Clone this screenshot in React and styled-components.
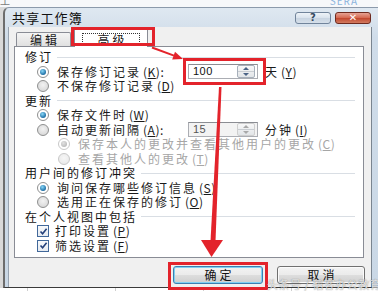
import React from 'react';
import styled, { createGlobalStyle } from 'styled-components';

const GlobalStyle = createGlobalStyle`
  html, body {
    margin: 0;
    padding: 0;
    background: #fff;
  }
  body {
    font-family: "Noto Sans CJK SC", "Noto Sans", sans-serif;
  }
`;

const FONT = `"Noto Sans CJK SC", "Noto Sans", sans-serif`;

const Page = styled.div`
  position: relative;
  width: 378px;
  height: 291px;
  overflow: hidden;
  display: flex;
  flex-direction: column;
  background: #f4f5f7;
`;

const TopStrip = styled.div`
  height: 7px;
  flex: none;
  display: flex;
  justify-content: space-between;
  overflow: hidden;
  background: #f7f8fa;
  font-size: 10px;
  line-height: 7px;
`;

const StripText = styled.span`
  margin: -3px 0 0 ${p => p.$left || 0}px;
  margin-right: ${p => p.$right || 0}px;
  color: ${p => p.$color};
  letter-spacing: 1px;
`;

const Middle = styled.div`
  flex: none;
  display: flex;
  padding-left: 3px;
  background: #d9d9d9;
`;

const Dialog = styled.div`
  width: 375px;
  height: 281px;
  box-sizing: border-box;
  display: flex;
  flex-direction: column;
  border-top: 1px solid #8c9aab;
  border-left: 2px solid #6d6d6d;
  border-bottom: 1px solid #3a3a3a;
  border-radius: 6px 0 0 0;
  background: linear-gradient(#dfe8f1, #cfdce9 30px, #cad8e6);
`;

const TitleBar = styled.div`
  height: 19px;
  flex: none;
  display: flex;
  align-items: center;
  justify-content: space-between;
  padding: 0 7px 0 7px;
`;

const Title = styled.span`
  font-size: 13px;
  letter-spacing: 1.2px;
  color: #111;
  line-height: 19px;
`;

const CaptionGroup = styled.div`
  display: flex;
  gap: 4px;
`;

const CaptionButton = styled.div`
  width: 36px;
  height: 12px;
  box-sizing: border-box;
  border-radius: 3px;
  display: flex;
  align-items: center;
  justify-content: center;
  font: bold 10px/10px "DejaVu Sans", sans-serif;
  border: 1px solid ${p => (p.$close ? '#6e2a1f' : '#71849b')};
  color: ${p => (p.$close ? '#fff' : '#34495f')};
  background: ${p =>
    p.$close
      ? 'linear-gradient(#e6a394, #d66c55 45%, #c24a31 55%, #d27b60)'
      : 'linear-gradient(#eef3f8, #dbe4ee 45%, #c9d5e2 55%, #d6e0ea)'};
`;

const Body = styled.div`
  flex: 1;
  display: flex;
  padding: 0 6px 0 3px;
`;

const Client = styled.div`
  flex: 1;
  display: flex;
  flex-direction: column;
  background: #f0f0f0;
  border-left: 1px solid #98a3b0;
  border-right: 1px solid #7a8590;
  font-family: ${FONT};
  font-size: 12px;
  letter-spacing: 2px;
  color: #1a1a1a;
`;

const TabsRow = styled.div`
  height: 19px;
  flex: none;
  display: flex;
  align-items: flex-end;
  gap: 3px;
  padding-left: 7px;
`;

const Highlight = styled.div`
  position: relative;
  display: inline-flex;
  &::after {
    content: '';
    position: absolute;
    top: ${p => p.$t}px;
    right: ${p => p.$r}px;
    bottom: ${p => p.$b}px;
    left: ${p => p.$l}px;
    border: 3px solid #e3232b;
    pointer-events: none;
    z-index: 5;
  }
`;

const Tab = styled.div`
  box-sizing: border-box;
  width: ${p => (p.$active ? 74 : 55)}px;
  height: ${p => (p.$active ? 19 : 14)}px;
  margin-bottom: ${p => (p.$active ? -1 : 0)}px;
  border: 1px solid #898c95;
  border-bottom: none;
  border-radius: 2px 2px 0 0;
  background: ${p => (p.$active ? '#fff' : 'linear-gradient(#f4f4f4, #e0e0e0)')};
  display: flex;
  align-items: center;
  justify-content: center;
  position: relative;
  z-index: ${p => (p.$active ? 2 : 1)};
  font-size: 12px;
  letter-spacing: 3px;
  line-height: 12px;
  padding-left: 3px;
`;

const FocusLabel = styled.span`
  outline: 1px dotted #333;
  padding: 0 11px 0 14px;
  line-height: 11px;
  height: 11px;
  margin: 2px 0 0 -3px;
`;

const Panel = styled.div`
  margin-left: 5px;
  width: 350px;
  height: 212px;
  box-sizing: border-box;
  border: 1px solid #898c95;
  background: #fff;
  padding: 3px 8px 0 10px;
  position: relative;
  z-index: 1;
`;

const SectionHeader = styled.div`
  display: flex;
  align-items: center;
  height: 14.5px;
  line-height: 14.5px;
  gap: 4px;
  white-space: nowrap;
  color: #111;
  &::after {
    content: '';
    flex: 1;
    height: 1px;
    background: #d9dee4;
  }
`;

const Row = styled.div`
  display: flex;
  align-items: center;
  height: 14.5px;
  line-height: 14.5px;
  padding-left: ${p => p.$indent || 12}px;
  color: ${p => (p.$disabled ? '#a6a6a6' : '#1a1a1a')};
  white-space: nowrap;
`;

const AccKey = styled.span`
  letter-spacing: 0.5px;
  margin-left: 2px;
  u {
    text-decoration-thickness: 1px;
    text-underline-offset: 1px;
  }
`;

const Acc = ({ k, colon }) => (
  <AccKey>
    (<u>{k}</u>){colon ? ':' : ''}
  </AccKey>
);

const Radio = styled.span`
  flex: none;
  position: relative;
  width: 12px;
  height: 12px;
  box-sizing: border-box;
  border-radius: 50%;
  margin-right: 8px;
  border: 1px solid ${p => (p.$disabled ? '#c8c8c8' : '#8e8f8f')};
  background: ${p =>
    p.$checked
      ? '#fff'
      : p.$disabled
      ? 'radial-gradient(circle at 50% 40%, #f6f6f6, #e6e6e6)'
      : 'radial-gradient(circle at 50% 40%, #f2f2f2, #d2d2d2)'};
  &::after {
    content: '';
    display: ${p => (p.$checked ? 'block' : 'none')};
    position: absolute;
    left: 2px;
    top: 2px;
    width: 6px;
    height: 6px;
    border-radius: 50%;
    background: ${p =>
      p.$disabled
        ? 'radial-gradient(circle at 40% 35%, #e2e2e2, #adadad)'
        : 'radial-gradient(circle at 40% 35%, #8ad8f8, #1d6ea5 70%, #174f7c)'};
  }
`;

const CheckBox = styled.span`
  flex: none;
  width: 12px;
  height: 12px;
  box-sizing: border-box;
  margin-right: 6px;
  border: 1px solid #41689a;
  background: linear-gradient(#f7f9fb, #e6ebf1);
  display: flex;
  align-items: center;
  justify-content: center;
`;

const FieldLabel = styled.span`
  width: 131px;
  flex: none;
`;

const SpinBox = styled.div`
  display: flex;
  align-items: center;
  width: 70px;
  height: 15px;
  box-sizing: border-box;
  border: 1px solid #abadb3;
  border-top-color: #8b8d93;
  background: ${p => (p.$disabled ? '#f3f3f3' : '#fff')};
  padding: 0 1px 0 4px;
  font-family: "Liberation Sans", Arial, sans-serif;
  font-size: 11px;
  letter-spacing: 0.5px;
  color: ${p => (p.$disabled ? '#555' : '#111')};
`;

const SpinValue = styled.span`
  flex: 1;
  line-height: 13px;
`;

const SpinButtons = styled.div`
  width: 16px;
  height: 11px;
  display: flex;
  flex-direction: column;
  border: 1px solid ${p => (p.$disabled ? '#cfcfcf' : '#a7b0bb')};
  border-radius: 2px;
  background: linear-gradient(#f8f8f8, #e2e5e8);
  margin-right: 1px;
`;

const SpinArrow = styled.span`
  flex: 1;
  display: flex;
  align-items: center;
  justify-content: center;
  border-top: ${p => (p.$down ? '1px solid #c9cdd2' : 'none')};
  &::before {
    content: '';
    border-left: 3px solid transparent;
    border-right: 3px solid transparent;
    ${p => (p.$down ? 'border-top' : 'border-bottom')}: 3px solid ${p => (p.$disabled ? '#a9a9a9' : '#4b6385')};
  }
`;

const Unit = styled.span`
  margin-left: 7px;
`;

const ButtonRow = styled.div`
  display: flex;
  justify-content: flex-end;
  gap: 14px;
  padding: 8px 6px 0 0;
`;

const Button = styled.button`
  box-sizing: border-box;
  width: ${p => p.$w}px;
  height: 18px;
  padding: 0 0 0 3px;
  border: 1px solid ${p => (p.$primary ? '#3c7fb1' : '#707070')};
  border-radius: 3px;
  background: linear-gradient(#f3f3f3 0%, #ebebeb 48%, #dddddd 52%, #cfcfcf 100%);
  box-shadow: inset 0 0 0 1px ${p => (p.$primary ? '#7fd0f2' : '#fbfbfb')};
  font-family: ${FONT};
  font-size: 12px;
  line-height: 16px;
  letter-spacing: 3px;
  color: #111;
`;

const BottomStrip = styled.div`
  flex: 1;
  background: repeating-linear-gradient(to right, #fff 0 27px, #cfcfcf 27px 28px, #fff 28px 88px);
`;

const Watermark = styled.div`
  position: absolute;
  left: 267px;
  top: 278px;
  font-family: ${FONT};
  font-size: 11px;
  line-height: 12px;
  letter-spacing: 0.5px;
  color: rgba(255, 255, 255, 0.8);
  text-shadow: 0 0 1px rgba(70, 70, 70, 0.8);
  white-space: nowrap;
  z-index: 8;
`;

const Overlay = styled.svg`
  position: absolute;
  left: 0;
  top: 0;
  pointer-events: none;
  z-index: 9;
`;

const Spin = ({ value, disabled }) => (
  <SpinBox $disabled={disabled}>
    <SpinValue>{value}</SpinValue>
    <SpinButtons $disabled={disabled}>
      <SpinArrow $disabled={disabled} />
      <SpinArrow $down $disabled={disabled} />
    </SpinButtons>
  </SpinBox>
);

const Check = () => (
  <CheckBox>
    <svg width="9" height="9" viewBox="0 0 9 9">
      <path d="M1.5 4.5 L3.6 6.8 L7.6 1.8" fill="none" stroke="#23407a" strokeWidth="1.6" />
    </svg>
  </CheckBox>
);

export default function App() {
  return (
    <>
      <GlobalStyle />
      <Page>
        <TopStrip>
          <StripText $left={0} $color="#7b7b7b">工</StripText>
          <StripText $right={20} $color="#8cb4dd">SERA</StripText>
        </TopStrip>
        <Middle>
          <Dialog>
            <TitleBar>
              <Title>共享工作簿</Title>
              <CaptionGroup>
                <CaptionButton>?</CaptionButton>
                <CaptionButton $close>✕</CaptionButton>
              </CaptionGroup>
            </TitleBar>
            <Body>
              <Client>
                <TabsRow>
                  <Tab>编辑</Tab>
                  <Highlight $t={-1} $r={-7} $b={0} $l={-3}>
                    <Tab $active>
                      <FocusLabel>高级</FocusLabel>
                    </Tab>
                  </Highlight>
                </TabsRow>
                <Panel>
                  <SectionHeader>修订</SectionHeader>
                  <Row>
                    <Radio $checked />
                    <FieldLabel>保存修订记录<Acc k="K" colon /></FieldLabel>
                    <Highlight $t={-6} $r={-8} $b={-6} $l={-5}>
                      <Spin value="100" />
                    </Highlight>
                    <Unit>天<Acc k="Y" /></Unit>
                  </Row>
                  <Row>
                    <Radio />
                    不保存修订记录<Acc k="D" />
                  </Row>
                  <SectionHeader>更新</SectionHeader>
                  <Row>
                    <Radio $checked />
                    保存文件时<Acc k="W" />
                  </Row>
                  <Row>
                    <Radio />
                    <FieldLabel>自动更新间隔<Acc k="A" colon /></FieldLabel>
                    <Spin value="15" disabled />
                    <Unit>分钟<Acc k="I" /></Unit>
                  </Row>
                  <Row $indent={33} $disabled>
                    <Radio $checked $disabled />
                    保存本人的更改并查看其他用户的更改<Acc k="C" />
                  </Row>
                  <Row $indent={33} $disabled>
                    <Radio $disabled />
                    查看其他人的更改<Acc k="T" />
                  </Row>
                  <SectionHeader>用户间的修订冲突</SectionHeader>
                  <Row>
                    <Radio $checked />
                    询问保存哪些修订信息<Acc k="S" />
                  </Row>
                  <Row>
                    <Radio />
                    选用正在保存的修订<Acc k="O" />
                  </Row>
                  <SectionHeader>在个人视图中包括</SectionHeader>
                  <Row>
                    <Check />
                    打印设置<Acc k="P" />
                  </Row>
                  <Row>
                    <Check />
                    筛选设置<Acc k="F" />
                  </Row>
                </Panel>
                <ButtonRow>
                  <Highlight $t={-4} $r={-5} $b={-6} $l={-5}>
                    <Button $primary $w={90}>确定</Button>
                  </Highlight>
                  <Button $w={88}>取消</Button>
                </ButtonRow>
              </Client>
            </Body>
          </Dialog>
        </Middle>
        <BottomStrip />
        <Watermark>头条号 / 韬客办公教育</Watermark>
        <Overlay width="378" height="291" viewBox="0 0 378 291">
          <line x1="152" y1="47.5" x2="174" y2="55.6" stroke="#e3232b" strokeWidth="2" />
          <polygon points="183,59 172.2,59.4 175,51.8" fill="#e3232b" />
          <polygon points="219,87 221.5,87 215.5,241 210.5,241" fill="#e3232b" />
          <polygon points="201,240 223,240 211.5,257" fill="#e3232b" />
        </Overlay>
      </Page>
    </>
  );
}
